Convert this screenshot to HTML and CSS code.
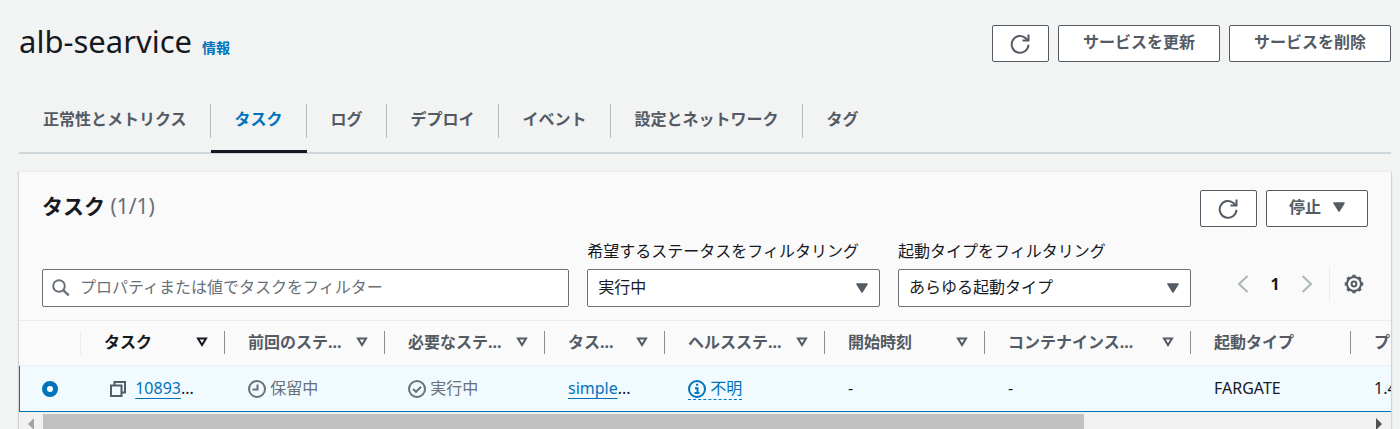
FILE: index.html
```html
<!DOCTYPE html>
<html lang="ja">
<head>
    <meta charset="UTF-8">
    <meta name="viewport" content="width=device-width, initial-scale=1.0">
    <title>alb-searvice</title>
    <link rel="stylesheet" href="styles.css">
</head>
<body>

    <!-- shared icons -->
    <svg class="sprite" aria-hidden="true">
        <symbol id="refresh" viewBox="0 0 20 20">
            <path d="M18.500 10.800A8.400 8.400 0 1 1 15.800 4.200L18 6.500" fill="none" stroke="currentColor" stroke-width="2"/>
            <path d="M18.500 .500v6h-6" fill="none" stroke="currentColor" stroke-width="2"/>
        </symbol>
        <symbol id="caret" viewBox="0 0 12 10">
            <path d="M1 1h10L6 9z" fill="currentColor" stroke="currentColor" stroke-width="1.5" stroke-linejoin="round"/>
        </symbol>
        <symbol id="sort" viewBox="0 0 12 10">
            <path d="M2 1.5h8L6 8z" fill="none" stroke="currentColor" stroke-width="2"/>
        </symbol>
    </svg>

    <header class="page-header">
        <div class="title">
            <h1>alb-searvice</h1>
            <a href="#">情報</a>
        </div>
        <div class="actions">
            <button class="btn icon-btn" aria-label="更新"><svg class="icon"><use href="#refresh"/></svg></button>
            <button class="btn">サービスを更新</button>
            <button class="btn">サービスを削除</button>
        </div>
    </header>

    <nav class="tabs">
        <a href="#">正常性とメトリクス</a>
        <a href="#" class="active">タスク</a>
        <a href="#">ログ</a>
        <a href="#">デプロイ</a>
        <a href="#">イベント</a>
        <a href="#">設定とネットワーク</a>
        <a href="#">タグ</a>
    </nav>

    <section class="card">
        <div class="card-header">
            <h2>タスク <span>(1/1)</span></h2>
            <div class="actions">
                <button class="btn icon-btn" aria-label="更新"><svg class="icon"><use href="#refresh"/></svg></button>
                <button class="btn menu-btn">停止 <svg class="caret"><use href="#caret"/></svg></button>
            </div>
        </div>

        <div class="toolbar">
            <div class="filters">
                <div class="control search">
                    <svg class="search-icon" viewBox="0 0 18 18"><circle cx="7" cy="7" r="5.8" fill="none" stroke="currentColor" stroke-width="2"/><path d="M11.2 11.2l5.6 5.2" stroke="currentColor" stroke-width="2.4"/></svg>
                    <input type="text" aria-label="タスクをフィルター" placeholder="プロパティまたは値でタスクをフィルター">
                </div>
                <div>
                    <label for="status">希望するステータスをフィルタリング</label>
                    <div class="control">
                        <select id="status"><option>実行中</option><option>停止済み</option></select>
                        <svg class="caret"><use href="#caret"/></svg>
                    </div>
                </div>
                <div>
                    <label for="launch">起動タイプをフィルタリング</label>
                    <div class="control">
                        <select id="launch"><option>あらゆる起動タイプ</option><option>FARGATE</option></select>
                        <svg class="caret"><use href="#caret"/></svg>
                    </div>
                </div>
            </div>
            <div class="pager">
                <button class="arrow" aria-label="前へ"><svg viewBox="0 0 12 18"><path d="M10.500 1L2 9l8.500 8" fill="none" stroke="currentColor" stroke-width="2"/></svg></button>
                <button class="page">1</button>
                <button class="arrow" aria-label="次へ"><svg viewBox="0 0 12 18"><path d="M1.500 1L10 9l-8.500 8" fill="none" stroke="currentColor" stroke-width="2"/></svg></button>
                <button class="settings" aria-label="設定">
                    <svg viewBox="0 0 20 20" fill="none" stroke="currentColor" stroke-width="2">
                        <circle cx="10" cy="10" r="7"/>
                        <circle cx="10" cy="10" r="8.300" pathLength="32" stroke-dasharray="2 2" stroke-dashoffset="1"/>
                        <circle cx="10" cy="10" r="2.400"/>
                    </svg>
                </button>
            </div>
        </div>

        <div class="table-wrap">
            <table>
                <colgroup>
                    <col class="w-check"><col class="w-task"><col class="w-m"><col class="w-m"><col class="w-s">
                    <col class="w-m"><col class="w-m"><col class="w-l"><col class="w-m"><col>
                </colgroup>
                <thead>
                    <tr>
                        <th class="check"></th>
                        <th class="sorted"><div><span>タスク</span><svg class="sort"><use href="#sort"/></svg></div></th>
                        <th><div><span>前回のステ...</span><svg class="sort"><use href="#sort"/></svg></div></th>
                        <th><div><span>必要なステ...</span><svg class="sort"><use href="#sort"/></svg></div></th>
                        <th><div><span>タス...</span><svg class="sort"><use href="#sort"/></svg></div></th>
                        <th><div><span>ヘルスステ...</span><svg class="sort"><use href="#sort"/></svg></div></th>
                        <th><div><span>開始時刻</span><svg class="sort"><use href="#sort"/></svg></div></th>
                        <th><div><span>コンテナインス...</span><svg class="sort"><use href="#sort"/></svg></div></th>
                        <th><div><span>起動タイプ</span></div></th>
                        <th><div><span>プラットフォーム</span></div></th>
                    </tr>
                </thead>
                <tbody>
                    <tr>
                        <td class="check"><input type="radio" name="task" aria-label="タスクを選択" checked></td>
                        <td class="task">
                            <svg class="copy" viewBox="0 0 18 18" fill="none" stroke="currentColor" stroke-width="2"><path d="M5.500 5V2H16v10.500h-3.500"/><path d="M2 5.500h10.500V16H2z"/></svg>
                            <a href="#">10893</a>...
                        </td>
                        <td class="muted">
                            <svg class="state" viewBox="0 0 18 18" fill="none" stroke="currentColor" stroke-width="2"><circle cx="9" cy="9" r="8"/><path d="M9.500 4.500v5h-5"/></svg>
                            保留中
                        </td>
                        <td class="muted">
                            <svg class="state" viewBox="0 0 18 18" fill="none" stroke="currentColor" stroke-width="2"><circle cx="9" cy="9" r="8"/><path d="M5 9l3 2.800 5-5"/></svg>
                            実行中
                        </td>
                        <td><a href="#">simple</a>...</td>
                        <td>
                            <a href="#" class="health"><svg class="state" viewBox="0 0 18 18" fill="none" stroke="currentColor" stroke-width="2"><circle cx="9" cy="9" r="8"/><path d="M8 4.800h2.200M7 8.200h2.500v4M6.500 13h5"/></svg>
                            不明</a>
                        </td>
                        <td>-</td>
                        <td>-</td>
                        <td>FARGATE</td>
                        <td>1.4.0</td>
                    </tr>
                </tbody>
            </table>
        </div>

        <div class="scrollbar" aria-hidden="true">
            <svg class="left" viewBox="0 0 6 12"><path d="M6 0v12L0 6z" fill="currentColor"/></svg>
            <div class="track"><div class="thumb"></div></div>
            <svg class="right" viewBox="0 0 6 12"><path d="M0 0v12l6-6z" fill="currentColor"/></svg>
        </div>
    </section>

</body>
</html>
```
FILE: styles.css
```css
* {
    margin: 0;
    padding: 0;
    box-sizing: border-box;
}

body {
    height: 100vh;
    overflow: hidden;
    padding: 25px 9px 0 19px;
    background: #f2f3f3;
    color: #16191f;
    font-family: "Noto Sans", "Noto Sans CJK JP", sans-serif;
    font-size: 16px;
    line-height: 24px;
}

button, input, select {
    font: inherit;
    color: inherit;
}

svg {
    display: block;
    flex: none;
}

a {
    color: #0073bb;
    text-decoration: none;
}

.sprite {
    position: absolute;
    width: 0;
    height: 0;
}

/* header */
.page-header, .card-header {
    display: flex;
    justify-content: space-between;
    align-items: flex-start;
}

.title {
    display: flex;
    align-items: baseline;
    gap: 10px;
}

h1 {
    font-size: 31px;
    font-weight: 400;
    line-height: 32px;
}

.title a {
    font-size: 14px;
    font-weight: 700;
}

.actions {
    display: flex;
    gap: 9px;
}

.btn {
    display: flex;
    align-items: center;
    height: 37px;
    padding: 0 24px 3px;
    gap: 12px;
    background: white;
    border: 1px solid #545b64;
    border-radius: 2px;
    color: #545b64;
    font-weight: 700;
    cursor: pointer;
}

.icon-btn {
    justify-content: center;
    width: 57px;
    padding: 0;
}

.menu-btn {
    padding: 0 22px 3px;
}

.icon {
    width: 20px;
    height: 20px;
}

.caret {
    width: 12px;
    height: 10px;
    color: #545b64;
}

/* tabs */
.tabs {
    display: flex;
    margin-top: 42px;
    border-bottom: 2px solid #d0d7da;
}

.tabs a {
    position: relative;
    height: 48px;
    padding: 3px 24px 0;
    color: #545b64;
    font-weight: 700;
}

.tabs a:not(:last-child)::after {
    content: "";
    position: absolute;
    top: 0;
    right: 0;
    width: 1px;
    height: 34px;
    background: #b5bcc0;
}

.tabs .active {
    color: #0073bb;
}

.tabs .active::before {
    content: "";
    position: absolute;
    left: 0;
    right: 0;
    bottom: -1px;
    height: 3px;
    background: #16191f;
}

/* card */
.card {
    margin-top: 18px;
    background: #fafafa;
    box-shadow: 0 1px 1px 1px #d0d5d6;
}

.card-header {
    padding: 18px 23px 0;
}

h2 {
    font-size: 21px;
    line-height: 32px;
}

h2 span {
    color: #687078;
    font-weight: 400;
}

.toolbar {
    display: flex;
    align-items: flex-end;
    gap: 38px;
    padding: 12px 14px 13px 23px;
    border-bottom: 1px solid #eaeded;
}

.filters {
    flex: 1;
    display: grid;
    grid-template-columns: 9fr 5fr 5fr;
    align-items: end;
    gap: 18px;
}

label {
    display: block;
    margin-bottom: 6px;
}

.control {
    position: relative;
}

.control input, .control select {
    display: block;
    width: 100%;
    height: 38px;
    padding: 0 10px 3px;
    background: white;
    border: 1px solid #687078;
    border-radius: 2px;
    appearance: none;
}

.search input {
    padding-left: 37px;
}

input::placeholder {
    color: #687078;
}

.control .caret {
    position: absolute;
    top: 14px;
    right: 12px;
    pointer-events: none;
}

.search-icon {
    position: absolute;
    top: 10px;
    left: 10px;
    width: 18px;
    height: 18px;
    color: #687078;
}

.pager {
    display: flex;
    align-items: center;
    margin-bottom: 5px;
}

.pager button {
    display: flex;
    justify-content: center;
    align-items: center;
    height: 36px;
    background: none;
    border: none;
}

.arrow {
    width: 28px;
    color: #aab7b8;
}

.arrow svg {
    width: 12px;
    height: 18px;
}

.page {
    width: 36px;
    font-weight: 700;
}

.pager .settings {
    width: 48px;
    margin-left: 8px;
    border-left: 1px solid #eaeded;
    color: #545b64;
}

.settings svg {
    width: 20px;
    height: 20px;
}

/* table */
.table-wrap {
    overflow: hidden;
}

table {
    width: 1746px;
    table-layout: fixed;
    border-collapse: separate;
    border-spacing: 0;
}

.w-check { width: 62px; }
.w-task { width: 144px; }
.w-s { width: 120px; }
.w-m { width: 160px; }
.w-l { width: 206px; }

th {
    height: 45px;
    padding: 0 17px 2px 23px;
    border-bottom: 1px solid #eaeded;
    color: #545b64;
    text-align: left;
    white-space: nowrap;
}

th div {
    position: relative;
    display: flex;
    justify-content: space-between;
    align-items: center;
}

th div::after {
    content: "";
    position: absolute;
    right: -17px;
    width: 1px;
    height: 23px;
    background: #879196;
}

th.check {
    background: linear-gradient(#eaeded, #eaeded) right center / 1px 23px no-repeat;
}

.sorted {
    color: #16191f;
}

.sort {
    width: 12px;
    height: 10px;
}

td {
    height: 46px;
    padding: 0 0 2px 23px;
    background: #f1faff;
    border-bottom: 1px solid #0073bb;
    white-space: nowrap;
}

td.check {
    padding: 0 0 0 22px;
    border-left: 1px solid #0073bb;
}

td a {
    text-decoration: underline 1px;
    text-underline-offset: 4px;
}

.muted {
    color: #687078;
}

.copy, .state {
    display: inline-block;
    width: 18px;
    height: 18px;
    vertical-align: -4px;
}

td.task {
    padding-left: 28px;
}

.copy {
    margin-right: 4px;
    color: #545b64;
}

td .health {
    border-bottom: 1px dashed #0073bb;
    text-decoration: none;
}

input[type="radio"] {
    display: block;
    width: 16px;
    height: 16px;
    background: white;
    border: 5px solid #0073bb;
    border-radius: 50%;
    appearance: none;
}

/* horizontal scrollbar */
.scrollbar {
    display: flex;
    align-items: center;
    height: 22px;
    padding: 2px 9px 0;
    background: #f1f1f1;
}

.scrollbar svg {
    width: 6px;
    height: 12px;
}

.left {
    color: #a3a3a3;
}

.right {
    color: #505050;
}

.track {
    flex: 1;
    height: 20px;
    margin: 0 9px;
}

.thumb {
    width: 78.6%;
    height: 20px;
    background: #c1c1c1;
}
```
